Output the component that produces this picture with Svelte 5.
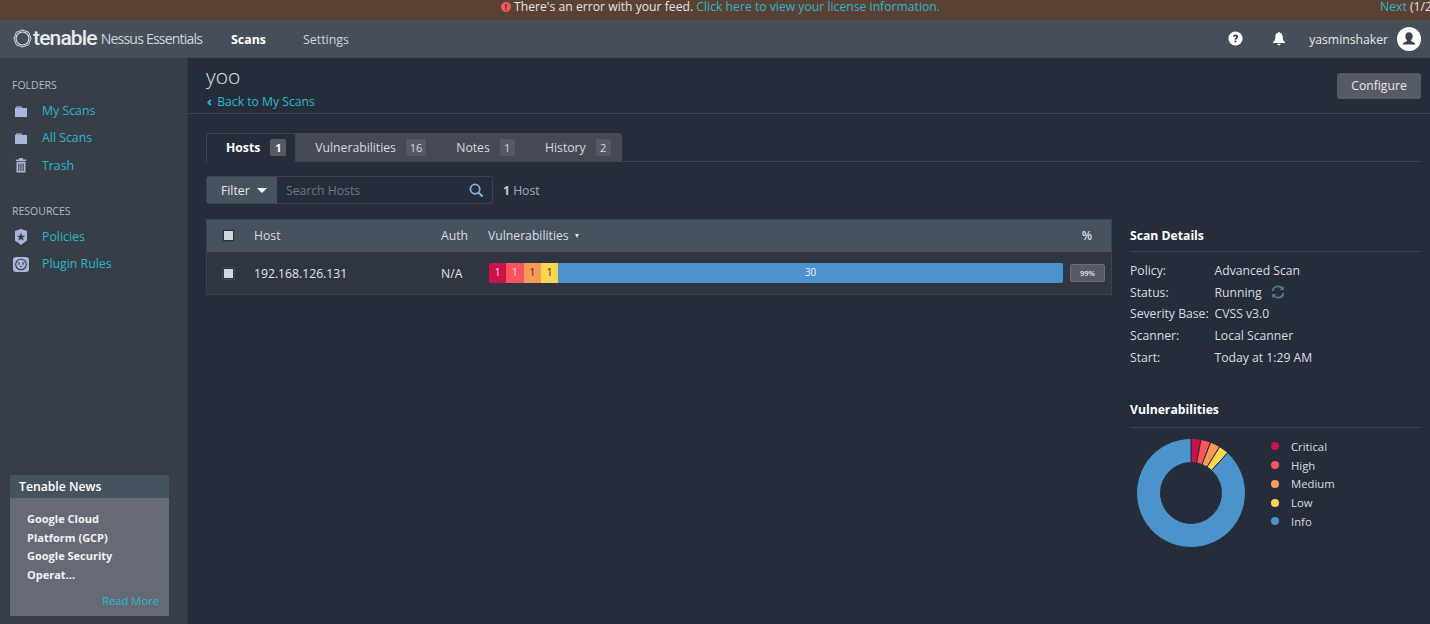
<script lang="ts">
	const folders = [
		{ name: 'My Scans', icon: 'folder' },
		{ name: 'All Scans', icon: 'folder' },
		{ name: 'Trash', icon: 'trash' }
	];
	const resources = [
		{ name: 'Policies', icon: 'shield' },
		{ name: 'Plugin Rules', icon: 'plug' }
	];
	const tabs = [
		{ name: 'Hosts', count: 1, active: true },
		{ name: 'Vulnerabilities', count: 16 },
		{ name: 'Notes', count: 1 },
		{ name: 'History', count: 2 }
	];
	const severities = [
		{ name: 'Critical', color: '#c8144b', count: 1 },
		{ name: 'High', color: '#f9545b', count: 1 },
		{ name: 'Medium', color: '#fb9a56', count: 1 },
		{ name: 'Low', color: '#fcd552', count: 1 }
	];
	const info = { name: 'Info', color: '#4a93cb', count: 30 };
	const details = [
		['Policy:', 'Advanced Scan'],
		['Status:', 'Running'],
		['Severity Base:', 'CVSS v3.0'],
		['Scanner:', 'Local Scanner'],
		['Start:', 'Today at 1:29 AM']
	];

	const legend = [...severities, info];
	const total = legend.reduce((n, s) => n + s.count, 0);

	function slice(from: number, to: number) {
		const R = 54.5;
		const r = 30.5;
		const a0 = (from / total) * Math.PI * 2;
		const a1 = (to / total) * Math.PI * 2;
		const large = a1 - a0 > Math.PI ? 1 : 0;
		const p = (rad: number, a: number) =>
			`${(55 + rad * Math.sin(a)).toFixed(2)} ${(55 - rad * Math.cos(a)).toFixed(2)}`;
		return `M${p(R, a0)}A${R} ${R} 0 ${large} 1 ${p(R, a1)}L${p(r, a1)}A${r} ${r} 0 ${large} 0 ${p(r, a0)}Z`;
	}

	let acc = 0;
	const slices = legend.map((s) => {
		const d = slice(acc, acc + s.count);
		acc += s.count;
		return { d, color: s.color };
	});
</script>

<div class="page">
	<div class="banner">
		<span></span>
		<div class="msg">
			<svg class="err" viewBox="0 0 10 10" width="10" height="10">
				<circle cx="5" cy="5" r="5" fill="#f9545b" />
				<rect x="4.2" y="1.8" width="1.6" height="4" fill="#5b4034" />
				<rect x="4.2" y="6.6" width="1.6" height="1.6" fill="#5b4034" />
			</svg>
			<span>There's an error with your feed. <a href="#lic">Click here to view your license information.</a></span>
		</div>
		<div class="next"><a href="#next">Next</a> (1/2)</div>
	</div>

	<nav class="topnav">
		<div class="logo">
			<svg viewBox="0 0 20 20" width="19" height="19">
				<path
					d="M10 1 16.400 3.300 19 10 16.400 16.700 10 19 3.600 16.700 1 10 3.600 3.300Z"
					fill="none"
					stroke="#c9cdd2"
					stroke-width="1.100"
				/>
				<circle cx="10" cy="10" r="6.800" fill="none" stroke="#e2e5e8" stroke-width="1.200" />
			</svg>
			<span class="word">tenable</span>
			<span class="product">Nessus Essentials</span>
		</div>
		<a class="nav-link on" href="#scans">Scans</a>
		<a class="nav-link" href="#settings">Settings</a>
		<div class="user">
			<svg viewBox="0 0 16 16" width="15" height="15">
				<circle cx="8" cy="8" r="7.500" fill="#fff" />
				<path
					d="M5.400 6.200C5.500 3.100 10.700 3.100 10.700 6c0 1.900-1.800 1.900-1.800 3.400H7.100C7.100 7.200 8.800 7.300 8.800 6 8.800 5 7.300 5 7.100 6.200Z"
					fill="#2c3440"
				/>
				<rect x="7.100" y="10.200" width="1.800" height="1.800" fill="#2c3440" />
			</svg>
			<svg class="bell" viewBox="0 0 14 16" width="14" height="15">
				<path
					d="M7 .8c.6 0 .9.4.9 1 2 .4 3 2 3 4.400 0 3 .8 4.400 2.600 5.900v.7H.5v-.7C2.300 10.600 3.100 9.200 3.100 6.200c0-2.400 1-4 3-4.400 0-.6.3-1 .9-1ZM5.300 13.600h3.400C8.600 15.700 5.400 15.700 5.300 13.600Z"
					fill="#fff"
				/>
			</svg>
			<span class="uname">yasminshaker</span>
			<svg viewBox="0 0 24 24" width="24" height="24">
				<circle cx="12" cy="12" r="12" fill="#fff" />
				<path
					d="M12 5.200c2.300 0 3.700 1.700 3.700 4 0 1.700-.7 3.100-1.600 3.900v1.100c1.900.7 4 1.400 4.300 3.300H5.600c.3-1.900 2.400-2.600 4.300-3.300v-1.100c-.9-.8-1.600-2.200-1.600-3.900 0-2.300 1.400-4 3.700-4Z"
					fill="#3a424d"
				/>
			</svg>
		</div>
	</nav>

	<div class="body">
		<aside class="side">
			<div class="side-title">FOLDERS</div>
			{#each folders as f}
				{@render sideItem(f)}
			{/each}
			<div class="side-title second">RESOURCES</div>
			{#each resources as f}
				{@render sideItem(f)}
			{/each}

			<div class="news">
				<div class="news-head">Tenable News</div>
				<div class="news-body">
					<p>Google Cloud Platform (GCP) Google Security Operat...</p>
					<a href="#more">Read More</a>
				</div>
			</div>
		</aside>

		<main class="main">
			<header class="head">
				<div>
					<h1>yoo</h1>
					<a class="back" href="#back">
						<svg viewBox="0 0 6 8" width="5" height="7"><path d="M4.500 1 1.500 4 4.500 7" fill="none" stroke="#2bb8cd" stroke-width="2.200" /></svg>
						Back to My Scans
					</a>
				</div>
				<button class="configure">Configure</button>
			</header>

			<div class="content">
				<div class="tabs">
					{#each tabs as t}
						<div class="tab" class:active={t.active}>
							{t.name}<span class="count">{t.count}</span>
						</div>
					{/each}
				</div>

				<div class="filter-row">
					<div class="filter">
						<div class="filter-btn">Filter <i class="caret"></i></div>
						<div class="search">
							<span>Search Hosts</span>
							<svg viewBox="0 0 16 16" width="15" height="15">
								<circle cx="6.500" cy="6.500" r="5" fill="none" stroke="#8fb0dc" stroke-width="1.800" />
								<path d="M10.300 10.300 14.500 14.500" stroke="#8fb0dc" stroke-width="2.200" />
							</svg>
						</div>
					</div>
					<div class="hostcount"><b>1</b> Host</div>
				</div>

				<div class="columns">
					<div class="table">
						<div class="tr th">
							<span class="cb"><i></i></span>
							<span class="c-host">Host</span>
							<span class="c-auth">Auth</span>
							<span class="c-vuln">Vulnerabilities <i class="sort"></i></span>
							<span class="c-pct">%</span>
						</div>
						<div class="tr row">
							<span class="cb"><i></i></span>
							<span class="c-host">192.168.126.131</span>
							<span class="c-auth">N/A</span>
							<div class="c-vuln bar">
								{#each severities as s}
									<span class="seg" style="background:{s.color}">{s.count}</span>
								{/each}
								<span class="seg info" style="background:{info.color}">{info.count}</span>
							</div>
							<span class="c-pct"><span class="pct">99%</span></span>
						</div>
					</div>

					<div class="panel">
						<h3>Scan Details</h3>
						<dl>
							{#each details as [k, v]}
								<dt>{k}</dt>
								<dd>
									{v}
									{#if k === 'Status:'}
										<svg viewBox="0 0 16 16" width="16" height="16">
											<path
												d="M2.500 7A5.600 5.600 0 0 1 12.300 4.300M13.500 9A5.600 5.600 0 0 1 3.700 11.700"
												fill="none"
												stroke="#4f7f80"
												stroke-width="1.700"
											/>
											<path d="M13.800 1.800V6H9.600ZM2.200 14.200V10H6.400Z" fill="#4f7f80" />
										</svg>
									{/if}
								</dd>
							{/each}
						</dl>

						<h3 class="vh">Vulnerabilities</h3>
						<div class="chart">
							<svg viewBox="0 0 110 110" width="110" height="110">
								{#each slices as s}
									<path d={s.d} fill={s.color} stroke="#252d3b" stroke-width="1" />
								{/each}
							</svg>
							<ul>
								{#each legend as s}
									<li><i style="background:{s.color}"></i>{s.name}</li>
								{/each}
							</ul>
						</div>
					</div>
				</div>
			</div>
		</main>
	</div>
</div>

{#snippet sideItem(f: { name: string; icon: string })}
	<a class="side-item" href="#item">
		<svg viewBox="0 0 16 16" width="16" height="16">
			{#if f.icon === 'folder'}
				<path d="M2 5h12v9H2Z" fill="#a9b6dc" />
				<path d="M3 3.200h5.500l1 1.800H2.500Z" fill="#8e9bbf" />
			{:else if f.icon === 'trash'}
				<path d="M6 1h4v1.500h3.200V4H2.800V2.500H6Z" fill="#a9b6dc" />
				<path
					d="M3.500 4.800h9V15.500h-9ZM5.300 6.500v7.500h1.100V6.500ZM7.450 6.500v7.500h1.100V6.500ZM9.600 6.500v7.500h1.100V6.500Z"
					fill="#a9b6dc"
					fill-rule="evenodd"
				/>
			{:else if f.icon === 'shield'}
				<path d="M8 0 14 2v9.500L8 16 2 11.500V2Z" fill="#a9b6dc" />
				<path
					d="M8 3.800 9.300 6.700h3L9.900 8.600l.8 3L8 9.900l-2.700 1.700.8-3L3.700 6.700h3Z"
					fill="#373e48"
				/>
			{:else}
				<rect x="0" y="1" width="16" height="15" rx="3" fill="#a9b6dc" />
				<circle cx="8" cy="8.500" r="5.300" fill="none" stroke="#373e48" stroke-width="1.100" />
				<path d="M5.300 6.300h1.200v2.400H5.300ZM9.500 6.300h1.200v2.400H9.500ZM7.300 9.700h1.400v1.600H7.300Z" fill="#373e48" />
			{/if}
		</svg>
		<span>{f.name}</span>
	</a>
{/snippet}

<style>
	:global(body) {
		margin: 0;
		background: #252d3b;
	}

	.page {
		width: 1430px;
		height: 624px;
		overflow: hidden;
		display: flex;
		flex-direction: column;
		font-family: 'Open Sans', 'Noto Sans', sans-serif;
		font-size: 12.2px;
		color: #d6dae0;
	}

	a {
		color: #2bb8cd;
		text-decoration: none;
	}

	.banner {
		height: 20px;
		flex: none;
		background: #5b4034;
		display: grid;
		grid-template-columns: 1fr auto 1fr;
		align-items: start;
		line-height: 14px;
		font-size: 12.2px;
		color: #e3e3e3;
	}

	.msg {
		white-space: nowrap;
		display: flex;
		align-items: center;
		gap: 3px;
		margin-left: 11px;
	}

	.next {
		justify-self: end;
		width: 50px;
		overflow: hidden;
		white-space: nowrap;
	}

	.topnav {
		height: 38px;
		flex: none;
		background: #464f59;
		border-bottom: 1px solid #3f4752;
		box-sizing: border-box;
		display: flex;
		align-items: center;
		padding-left: 13px;
		padding-right: 9px;
	}

	.logo {
		display: flex;
		align-items: center;
		width: 218px;
		height: 38px;
	}

	.word {
		font-family: Roboto, sans-serif;
		font-size: 21px;
		font-weight: 500;
		letter-spacing: -0.85px;
		color: #e8eaec;
		margin-left: 1px;
		line-height: 1;
	}

	.product {
		font-size: 14px;
		letter-spacing: -0.78px;
		color: #d0d4d9;
		margin-left: 4px;
	}

	.nav-link {
		color: #d0d4d9;
		margin-right: 37px;
		font-size: 12.400px;
		padding-top: 2px;
	}

	.nav-link.on {
		color: #fff;
		font-weight: 700;
	}

	.user {
		margin-left: auto;
		display: flex;
		align-items: center;
		color: #e6e8ea;
	}

	.bell {
		margin-left: 29px;
	}

	.uname {
		margin-left: 23px;
		margin-right: 9px;
		padding-top: 2px;
	}

	.body {
		flex: 1;
		display: flex;
		min-height: 0;
	}

	.side {
		width: 188px;
		flex: none;
		box-sizing: border-box;
		background: #373e48;
		border-right: 1px solid #2e3541;
		padding: 19px 0 0 12px;
		display: flex;
		flex-direction: column;
	}

	.side-title {
		font-size: 10.500px;
		color: #b4b9c0;
		line-height: 16px;
		margin-bottom: 4px;
	}

	.side-title.second {
		margin-top: 24px;
	}

	.side-item {
		display: flex;
		align-items: center;
		gap: 13px;
		height: 27.300px;
		font-size: 12.300px;
	}

	.side-item svg {
		margin-left: 1px;
	}

	.news {
		margin-top: auto;
		margin-bottom: 8px;
		margin-left: -2px;
		width: 159px;
	}

	.news-head {
		background: #47525f;
		color: #fff;
		font-weight: 600;
		font-size: 12.200px;
		height: 23px;
		line-height: 23px;
		padding-left: 9px;
	}

	.news-body {
		background: #666a75;
		height: 118px;
		box-sizing: border-box;
		padding: 12px 10px 0 17px;
		display: flex;
		flex-direction: column;
	}

	.news-body p {
		margin: 0;
		color: #f2f2f4;
		font-weight: 700;
		font-size: 11px;
		line-height: 18.700px;
		width: 105px;
	}

	.news-body a {
		margin-top: 8px;
		align-self: flex-end;
		font-size: 11.200px;
	}

	.main {
		flex: 1;
		min-width: 0;
	}

	.head {
		height: 56px;
		box-sizing: border-box;
		border-bottom: 1px solid #3c4452;
		padding: 6px 9px 0 18px;
		display: flex;
		justify-content: space-between;
		align-items: flex-start;
	}

	h1 {
		margin: -2px 0 0;
		font-size: 21px;
		font-weight: 300;
		line-height: 28px;
		color: #e3e5e8;
	}

	.back {
		font-size: 12.200px;
		line-height: 17px;
		display: block;
		margin-top: 3px;
		white-space: nowrap;
	}

	.back svg {
		margin: 0 2px 0 1px;
	}

	.configure {
		margin-top: 9px;
		width: 84px;
		height: 26px;
		border: 0;
		border-radius: 3px;
		background: #565a64;
		color: #e6e8ea;
		font: inherit;
		padding: 0 0 2px;
	}

	.content {
		padding: 19px 9px 0 18px;
	}

	.tabs {
		display: flex;
		height: 29px;
		box-sizing: border-box;
		border-bottom: 1px solid #3c4452;
	}

	.tab {
		background: #464a54;
		padding: 0 11.300px 0 19px;
		display: flex;
		align-items: center;
		color: #d6dae0;
		height: 28px;
		box-sizing: border-box;
	}

	.tab:last-child {
		border-radius: 0 3px 0 0;
	}

	.tab.active {
		background: #252d3b;
		color: #fff;
		font-weight: 700;
		border: 1px solid #3c4452;
		border-bottom: 0;
		height: 29px;
		border-radius: 3px 0 0 0;
		padding: 0 9px 2px 19px;
	}

	.count {
		background: #565a64;
		border-radius: 2px;
		font-size: 11px;
		font-weight: 400;
		min-width: 15px;
		padding: 0 3.700px;
		box-sizing: border-box;
		text-align: center;
		height: 17px;
		line-height: 17px;
		margin-left: 10px;
	}

	.active .count {
		min-width: 16px;
		font-weight: 700;
		color: #fff;
	}

	.filter-row {
		display: flex;
		align-items: center;
		margin-top: 14px;
		height: 28px;
	}

	.filter {
		display: flex;
		width: 287px;
		height: 28px;
		box-sizing: border-box;
		border: 1px solid #3c4452;
		border-radius: 3px;
	}

	.filter-btn {
		background: #47525f;
		width: 70px;
		display: flex;
		align-items: center;
		padding-left: 14px;
		box-sizing: border-box;
		gap: 7px;
		color: #e6e8ea;
	}

	.caret {
		width: 0;
		height: 0;
		border: 5px solid transparent;
		border-top-color: #fff;
		border-bottom: 0;
	}

	.search {
		flex: 1;
		display: flex;
		align-items: center;
		justify-content: space-between;
		padding: 0 8px 0 9px;
		color: #6f7580;
	}

	.hostcount {
		margin-left: 10px;
		color: #a7acb4;
	}

	.hostcount b {
		color: #c8ccd2;
	}

	.columns {
		display: flex;
		margin-top: 15px;
	}

	.table {
		width: 906px;
		flex: none;
		height: 76px;
		box-sizing: border-box;
		border: 1px solid #3c4452;
		align-self: flex-start;
	}

	.tr {
		display: flex;
		align-items: center;
	}

	.th {
		height: 32px;
		background: #47525f;
		color: #d8dce0;
		padding-bottom: 2px;
		box-sizing: border-box;
	}

	.row {
		height: 42px;
		background: #303641;
		color: #e3e5e8;
	}

	.cb {
		width: 47px;
		flex: none;
		padding-left: 16px;
		box-sizing: border-box;
	}

	.cb i {
		display: block;
		width: 11px;
		height: 11px;
		box-sizing: border-box;
		background: #d5d6d9;
		border: 1px solid #2a3442;
		outline: 1px solid #3c4a5c;
	}

	.c-host {
		width: 187px;
		flex: none;
	}

	.c-auth {
		width: 47px;
		flex: none;
	}

	.c-vuln {
		width: 575px;
		flex: none;
	}

	.sort {
		display: inline-block;
		width: 0;
		height: 0;
		border: 2.500px solid transparent;
		border-top: 4px solid #e6e8ea;
		border-bottom: 0;
		margin-left: 3px;
		vertical-align: 2px;
	}

	.bar {
		display: flex;
		height: 20px;
		border-radius: 2px;
		overflow: hidden;
		font-size: 10px;
		margin-left: 1px;
		width: 574px;
	}

	.seg {
		width: 17.300px;
		text-align: center;
		line-height: 19px;
		color: #2a2a2a;
		flex: none;
	}

	.seg:nth-child(-n + 2) {
		color: #f4e6e6;
	}

	.seg.info {
		flex: 1;
		color: #f0f4f8;
	}

	.c-pct {
		flex: 1;
		text-align: right;
		padding-right: 6px;
		font-size: 11px;
	}

	.th .c-pct {
		padding-right: 19px;
		font-size: 12px;
		font-weight: 600;
	}

	.pct {
		display: inline-block;
		width: 35px;
		height: 18px;
		box-sizing: border-box;
		line-height: 16px;
		background: #565a64;
		border: 1px solid #6a6e77;
		border-radius: 2px;
		font-size: 7.500px;
		font-weight: 600;
		text-align: center;
		vertical-align: middle;
	}

	.panel {
		margin-left: 18px;
		width: 291px;
		color: #d8dce0;
	}

	h3 {
		margin: 0;
		color: #fff;
		font-size: 12.200px;
		font-weight: 700;
		height: 33px;
		line-height: 33px;
		box-sizing: border-box;
		border-bottom: 1px solid #3c4452;
	}

	h3.vh {
		height: 35px;
		margin-top: 25px;
	}

	dl {
		margin: 8px 0 0;
		display: grid;
		grid-template-columns: 84.500px 1fr;
		grid-auto-rows: 21.600px;
		align-items: center;
	}

	dt,
	dd {
		margin: 0;
	}

	dd svg {
		vertical-align: -3px;
		margin-left: 5px;
	}

	.chart {
		display: flex;
		margin: 10px 0 0 6px;
	}

	ul {
		list-style: none;
		padding: 0;
		margin: -1px 0 0 25px;
		font-size: 11.300px;
	}

	li {
		height: 18.750px;
		display: flex;
		align-items: center;
	}

	li i {
		width: 8px;
		height: 8px;
		border-radius: 50%;
		margin-right: 12px;
	}
</style>
